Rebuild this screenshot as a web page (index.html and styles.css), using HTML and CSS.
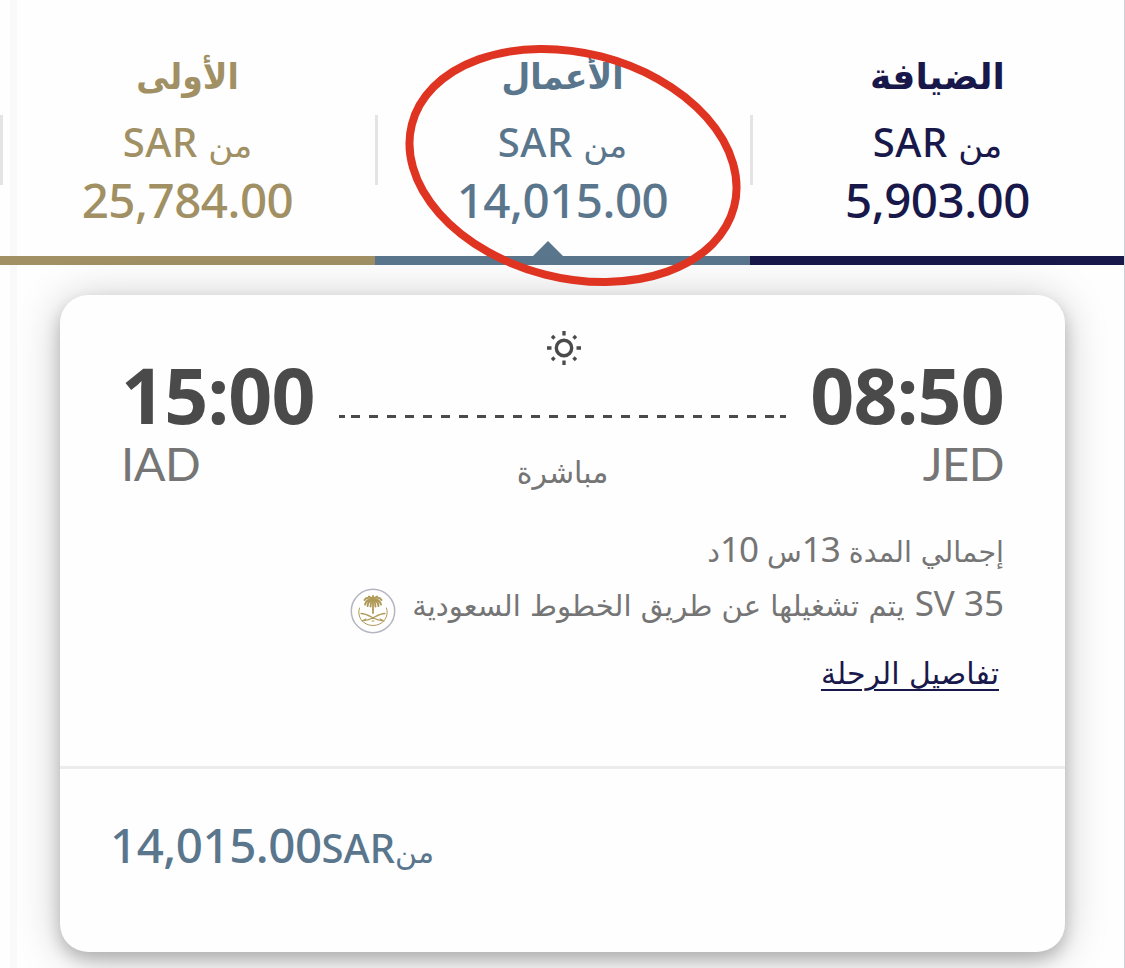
FILE: index.html
```html
<!DOCTYPE html>
<html lang="ar" dir="rtl">
<head>
    <meta charset="UTF-8">
    <meta name="viewport" content="width=device-width, initial-scale=1.0">
    <title>اختيار الرحلة</title>
    <link rel="stylesheet" href="styles.css">
</head>
<body>
<div class="page">
    <div class="tabs">
        <div class="tab guest">
            <h2>الضيافة</h2>
            <p class="from"><span class="ar">من</span> <span>SAR</span></p>
            <p class="price">5,903.00</p>
        </div>
        <div class="tab business">
            <h2>الأعمال</h2>
            <p class="from"><span class="ar">من</span> <span>SAR</span></p>
            <p class="price">14,015.00</p>
            <i class="arrow"></i>
        </div>
        <div class="tab first">
            <h2>الأولى</h2>
            <p class="from"><span class="ar">من</span> <span>SAR</span></p>
            <p class="price">25,784.00</p>
        </div>
    </div>

    <div class="card">
        <div class="route">
            <div class="stop">
                <div class="time">08:50</div>
                <div class="code">JED</div>
            </div>
            <div class="path">
                <svg class="sun" width="36" height="36" viewBox="0 0 36 36">
                    <circle cx="18" cy="18" r="7.700" fill="none" stroke="#4a4a4a" stroke-width="3.400"/>
                    <path d="M18 1v4.500M18 30.500v4.500M1 18h4.500M30.500 18h4.500M6 6l2.500 2.500M27.500 27.500l2.500 2.500M6 30l2.500-2.500M27.500 8.500l2.500-2.500" stroke="#4a4a4a" stroke-width="3.300"/>
                </svg>
                <svg class="dashes" width="447" height="3" viewBox="0 0 447 3">
                    <path d="M0 1.500h6M441 1.500h6" stroke="#4a4a4a" stroke-width="3"/>
                    <path d="M12 1.500h423" stroke="#4a4a4a" stroke-width="3" stroke-dasharray="9 9"/>
                </svg>
                <div class="direct">مباشرة</div>
            </div>
            <div class="stop left">
                <div class="time">15:00</div>
                <div class="code">IAD</div>
            </div>
        </div>
        <div class="info duration"><span class="ar">إجمالي المدة</span> <b>13</b><span class="ar">س</span> <b>10</b><span class="ar">د</span></div>
        <div class="info operator">
            <span dir="ltr">SV 35</span>
            <span class="ar">يتم تشغيلها عن طريق الخطوط السعودية</span>
            <svg class="logo" width="46" height="46" viewBox="0 0 46 46">
                <circle cx="23" cy="23" r="21.700" fill="#fff" stroke="#b4b6c2" stroke-width="1.500"/>
                <g fill="none" stroke="#b09a58" stroke-linecap="round">
                    <path d="M9.500 20c-3 8 3 17.500 13.500 17.500s16.500-9.500 13.500-17.500" stroke-width="1"/>
                    <path d="M11 25.500c8 0 13 7 21 7M35 25.500c-8 0-13 7-21 7" stroke-width="1.300"/>
                    <path d="M12 33l4-2M34 33l-4-2M22 33h2" stroke-width="1.200"/>
                    <path d="M23 12v13" stroke-width="1.800"/>
                    <path d="M23 11c-3-2-7-1.500-8.500 1M23 11c-4 0-7 2-8 5.500M23 11c-3 1-5 3.500-5.500 7M23 11c-1.500 2-2.500 4-2.500 7.500M23 11c3-2 7-1.500 8.500 1M23 11c4 0 7 2 8 5.500M23 11c3 1 5 3.500 5.500 7M23 11c1.500 2 2.500 4 2.500 7.500M23 11l-4-2.500M23 11l4-2.500M23 11V8" stroke-width="2"/>
                </g>
            </svg>
        </div>
        <a class="details">تفاصيل الرحلة</a>
        <div class="total">
            <span class="ar">من</span><span class="currency">SAR</span><span class="price">14,015.00</span>
        </div>
    </div>

    <!-- hand-drawn mark round the business fare -->
    <svg class="mark" width="350" height="260" viewBox="398 36 350 260">
        <ellipse cx="573" cy="165.500" rx="166.300" ry="112.500" transform="rotate(14.3 573 165.500)" fill="none" stroke="#df3422" stroke-width="8"/>
    </svg>
</div>
</body>
</html>
```
FILE: styles.css
```css
* {
    box-sizing: border-box;
}
body {
    margin: 0;
    background: #fefefe;
    font-family: "Noto Sans", "DejaVu Sans", sans-serif;
}
h2, p {
    margin: 0;
}
.page {
    position: relative;
    width: 1125px;
    height: 968px;
    overflow: hidden;
    background: linear-gradient(to right, transparent 10px, #f9f9f9 10px, #f9f9f9 17px, transparent 17px);
    border-right: 1px solid #cfd0d8;
}
.ar {
    font-family: "DejaVu Sans", sans-serif;
}

/* fare tabs */
.tabs {
    display: grid;
    grid-template-columns: repeat(3, 375px);
    height: 265px;
    margin-right: -1px;
}
.tab {
    position: relative;
    padding-top: 48px;
    text-align: center;
    border-bottom: 9px solid currentColor;
    background: linear-gradient(#e4e4e4, #e4e4e4) 0 115px / 3px 70px no-repeat;
}
.guest {
    color: #18184a;
}
.business {
    color: #5a768d;
}
.first {
    color: #a09064;
}
.tab h2 {
    height: 64px;
    line-height: 58px;
    font-family: "DejaVu Sans", sans-serif;
    font-size: 36px;
}
.business h2, .first h2 {
    transform: scaleX(.92);
}
.from {
    height: 58px;
    line-height: 60px;
    font-size: 40px;
    font-weight: 500;
    letter-spacing: .5px;
}
.from .ar {
    font-size: 34px;
    font-weight: 400;
    letter-spacing: 0;
}
.price {
    font-size: 47.5px;
    font-weight: 500;
    line-height: 60px;
    letter-spacing: -0.5px;
}
.arrow {
    position: absolute;
    left: 158px;
    bottom: 0;
    border: 15px solid transparent;
    border-top: 0;
    border-bottom-color: currentColor;
}

/* flight */
.card {
    position: relative;
    width: 1005px;
    height: 657px;
    margin: 30px 59px 0 0;
    padding: 35px 61px 0 51px;
    border-radius: 28px;
    background: #fefefe;
    box-shadow: 0 8px 16px rgba(0, 0, 0, .2), 0 4px 44px rgba(0, 0, 0, .22);
    color: #757575;
}
.route {
    display: flex;
    justify-content: space-between;
    height: 191px;
    padding-left: 10px;
}
.stop {
    padding-top: 31px;
    direction: ltr;
    text-align: right;
}
.stop.left {
    text-align: left;
}
.time {
    height: 68px;
    color: #4a4a4a;
    font-size: 77px;
    font-weight: 700;
    line-height: 68px;
    letter-spacing: -0.8px;
}
.code {
    font-family: Lato, sans-serif;
    font-size: 47px;
    line-height: 68px;
    letter-spacing: -0.5px;
}
.path {
    display: flex;
    flex-direction: column;
    align-items: center;
}
.sun {
    margin-right: -2px;
}
.dashes {
    margin: 49px 0 29px;
}
.direct {
    font: 30px/52px "DejaVu Sans", sans-serif;
}
.info {
    display: flex;
    align-items: baseline;
    height: 54px;
    font-size: 35px;
    line-height: 56px;
    white-space: pre;
}
.info b {
    font-weight: 400;
}
.info .ar {
    font-size: 29px;
}
.duration .ar {
    font-size: 28.500px;
}
.duration .ar + b {
    margin-right: 9px;
}
.duration b {
    letter-spacing: -1px;
}
.operator {
    gap: 10px;
}
.operator .ar {
    font-size: 29.100px;
}
.logo {
    align-self: flex-start;
    margin: 13px 6px 0 0;
}
.details {
    display: block;
    height: 137px;
    padding: 18px 5px 0 0;
    color: #18184a;
    font: 30px/54px "DejaVu Sans", sans-serif;
    text-decoration: underline;
    text-decoration-thickness: 2px;
    text-underline-offset: 5px;
}
.total {
    display: flex;
    justify-content: flex-end;
    align-items: baseline;
    margin: 0 -61px 0 -51px;
    padding: 46px 0 0 50px;
    border-top: 3px solid #ececec;
    color: #5a768d;
    line-height: 60px;
}
.currency {
    font-size: 40px;
    font-weight: 500;
}
.total .ar {
    font-size: 30px;
}
.mark {
    position: absolute;
    left: 398px;
    top: 36px;
}
```
